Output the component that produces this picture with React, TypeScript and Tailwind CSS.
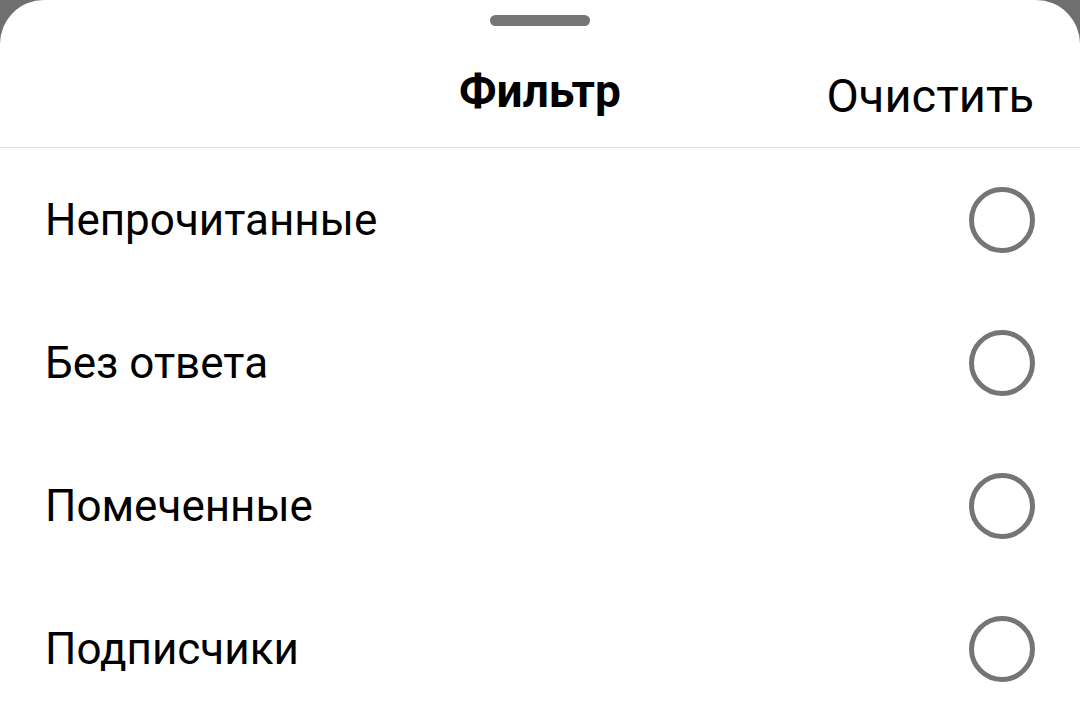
import React from 'react';

const items = ['Непрочитанные', 'Без ответа', 'Помеченные', 'Подписчики'];

function Radio() {
  return (
    <span className="block h-[66px] w-[66px] rounded-full border-[5px] border-[#757575]" />
  );
}

export default function App() {
  return (
    <div className="h-[720px] w-[1080px] overflow-hidden bg-[#6f6f6f] font-['Roboto',sans-serif]">
      <div className="h-full rounded-t-[44px] bg-white">
        <div className="flex justify-center pt-[15px]">
          <div className="h-[11px] w-[100px] rounded-full bg-[#757575]" />
        </div>
        <div className="relative flex h-[121px] items-center justify-center pt-[10px]">
          <h1 className="text-[46px] font-bold text-black">Фильтр</h1>
          <button className="absolute right-[46px] top-[10px] flex h-full items-center text-[47px] text-black">
            Очистить
          </button>
        </div>
        <div className="h-px bg-[#dedede]" />
        {items.map((label) => (
          <div key={label} className="flex h-[143px] items-center justify-between pl-[45px] pr-[45px]">
            <span className="text-[44px] text-black">{label}</span>
            <Radio />
          </div>
        ))}
      </div>
    </div>
  );
}
